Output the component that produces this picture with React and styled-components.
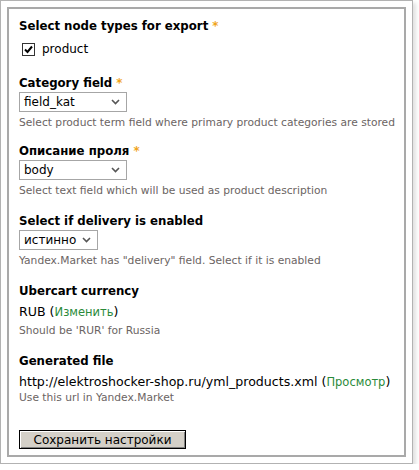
import React from "react";
import styled, { createGlobalStyle } from "styled-components";

const Global = createGlobalStyle`
  html, body {
    margin: 0;
    padding: 0;
    background: #fff;
  }
  body {
    font-family: "DejaVu Sans", Verdana, sans-serif;
    color: #000;
  }
`;

const Frame = styled.div`
  width: 413px;
  height: 464px;
  box-sizing: border-box;
  border: 1px solid #b2b2b2;
  background: #fff;
  padding: 6px;
  box-shadow: 3px 3px 4px rgba(0, 0, 0, 0.12);
`;

const Panel = styled.div`
  height: 100%;
  box-sizing: border-box;
  border: 2px solid #a9a9a9;
  padding: 9px 0 0 10px;
  display: flex;
  flex-direction: column;
`;

const Group = styled.div`
  display: flex;
  flex-direction: column;
  align-items: flex-start;
  margin-bottom: ${(p) => p.$gap ?? 15}px;
`;

const Label = styled.div`
  font-weight: bold;
  font-size: 11.75px;
  line-height: 16px;
  margin-bottom: 1px;
`;

const Required = styled.span`
  color: #f0a41c;
  font-weight: bold;
  margin-left: 4px;
`;

const CheckRow = styled.label`
  display: flex;
  align-items: center;
  gap: 7px;
  margin: 6px 0 0 3px;
  font-size: 12px;
  line-height: 17px;
`;

const CheckBox = styled.span`
  width: 11px;
  height: 11px;
  border: 1px solid #333;
  background: #fff;
  display: flex;
  align-items: center;
  justify-content: center;
`;

const Select = styled.div`
  width: ${(p) => p.$width}px;
  height: 20px;
  box-sizing: border-box;
  border: 1px solid #a6a6a6;
  background: #fff;
  display: flex;
  align-items: center;
  justify-content: space-between;
  padding: 0 6px 0 4px;
  font-size: 12px;
`;

const Description = styled.div`
  font-size: 10.7px;
  line-height: 12px;
  color: #6b6463;
  margin-top: ${(p) => p.$top ?? 5}px;
  white-space: nowrap;
`;

const Value = styled.div`
  font-size: 12.6px;
  line-height: 16px;
  margin-top: 4px;
  white-space: nowrap;
`;

const Link = styled.a`
  color: #2a8a3a;
  text-decoration: none;
  font-size: 11.5px;
`;

const Button = styled.button`
  margin-top: 11px;
  align-self: flex-start;
  height: 19px;
  width: 167px;
  box-sizing: border-box;
  padding: 0;
  background: #d4d0c8;
  border: 1px solid #000;
  box-shadow: inset 1px 1px 0 #fff, inset -1px -1px 0 #808080;
  font-family: "DejaVu Sans", Verdana, sans-serif;
  font-size: 12px;
  color: #000;
`;

const Chevron = () => (
  <svg width="9" height="6" viewBox="0 0 9 6">
    <path d="M1 1 L4.5 4.5 L8 1" fill="none" stroke="#555" strokeWidth="1.6" />
  </svg>
);

const Tick = () => (
  <svg width="9" height="9" viewBox="0 0 9 9">
    <path d="M1 4.5 L3.5 7 L8 1.5" fill="none" stroke="#000" strokeWidth="2" />
  </svg>
);

const Field = ({ label, required, value, width, help, gap }) => (
  <Group $gap={gap}>
    <Label>
      {label}
      {required && <Required>*</Required>}
    </Label>
    <Select $width={width}>
      <span>{value}</span>
      <Chevron />
    </Select>
    <Description>{help}</Description>
  </Group>
);

export default function App() {
  return (
    <>
      <Global />
      <Frame>
        <Panel>
          <Group $gap={17}>
            <Label>
              Select node types for export<Required>*</Required>
            </Label>
            <CheckRow>
              <CheckBox>
                <Tick />
              </CheckBox>
              product
            </CheckRow>
          </Group>
          <Field
            label="Category field"
            required
            value="field_kat"
            width={108}
            gap={14}
            help="Select product term field where primary product categories are stored"
          />
          <Field
            label="Описание проля"
            required
            value="body"
            width={108}
            gap={16}
            help="Select text field which will be used as product description"
          />
          <Field
            label="Select if delivery is enabled"
            value="истинно"
            width={79}
            gap={16}
            help={'Yandex.Market has "delivery" field. Select if it is enabled'}
          />
          <Group $gap={16}>
            <Label>Ubercart currency</Label>
            <Value>
              RUB (<Link href="#">Изменить</Link>)
            </Value>
            <Description>Should be 'RUR' for Russia</Description>
          </Group>
          <Group>
            <Label>Generated file</Label>
            <Value>
              http://elektroshocker-shop.ru/yml_products.xml (<Link href="#">Просмотр</Link>)
            </Value>
            <Description $top={2}>Use this url in Yandex.Market</Description>
          </Group>
          <Button>Сохранить настройки</Button>
        </Panel>
      </Frame>
    </>
  );
}
